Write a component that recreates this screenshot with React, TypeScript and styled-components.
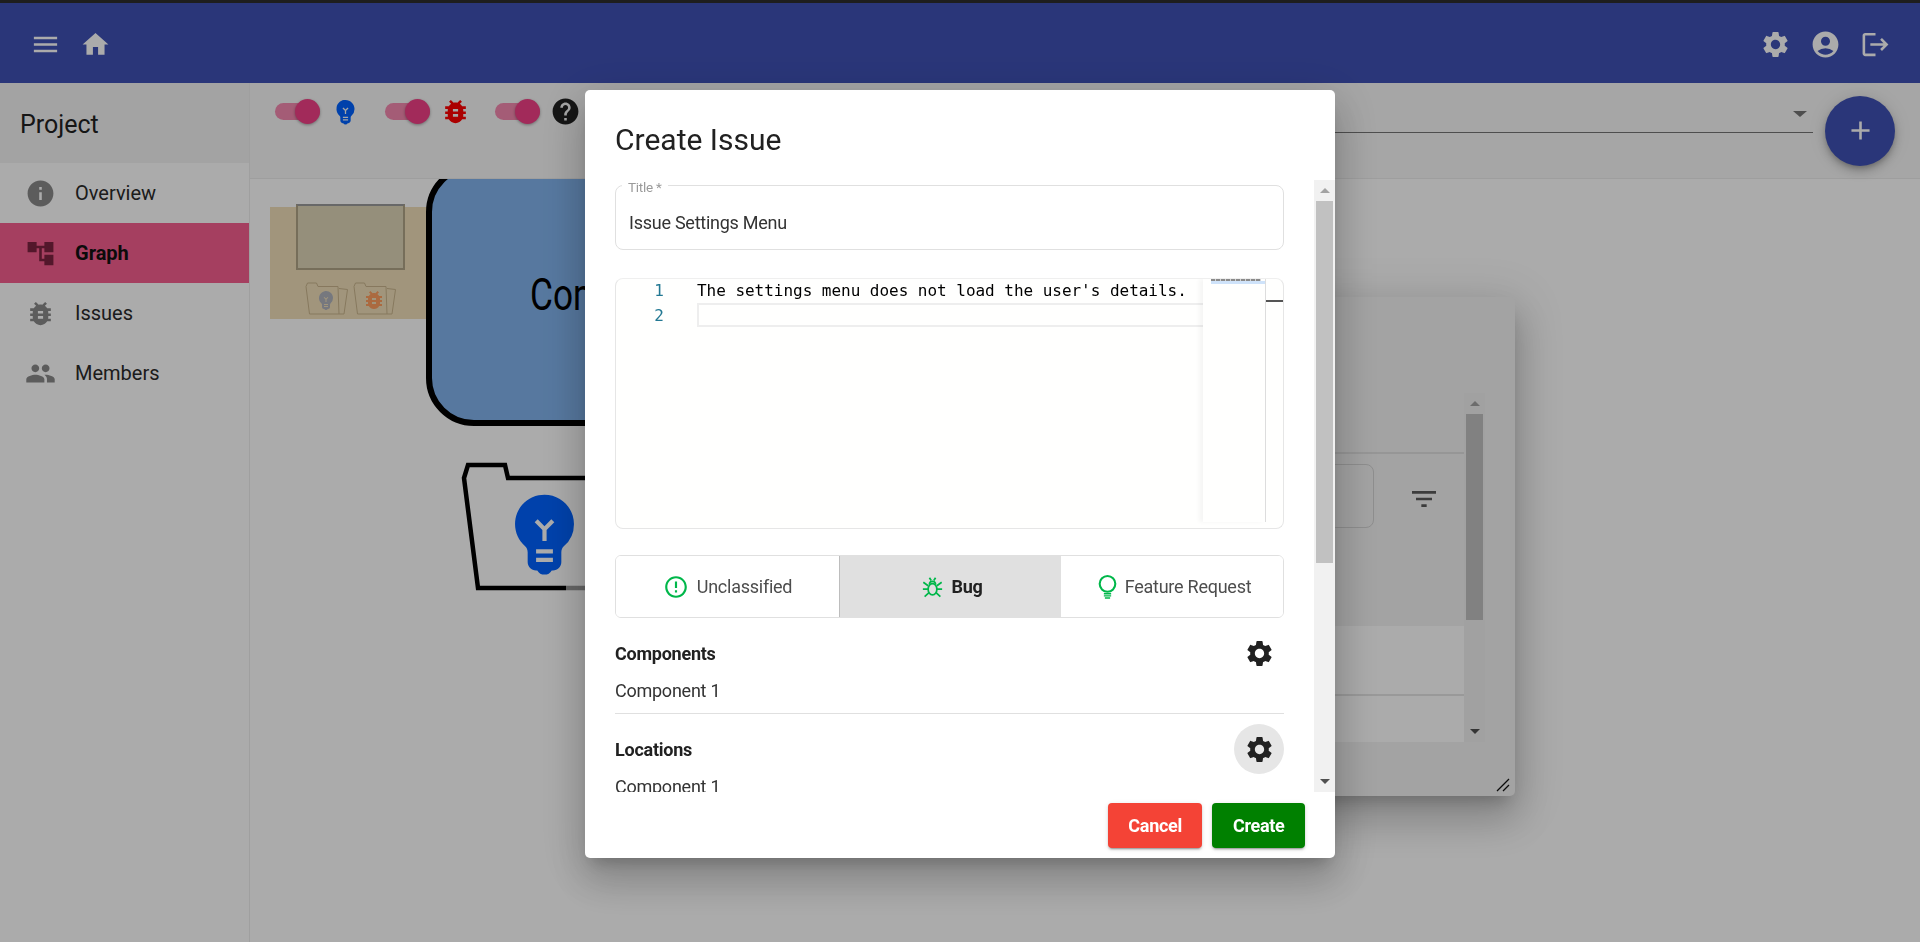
import styled, { createGlobalStyle } from 'styled-components';
import {
  MdAccountCircle,
  MdAccountTree,
  MdAdd,
  MdBugReport,
  MdEmojiObjects,
  MdErrorOutline,
  MdFilterList,
  MdHelp,
  MdHome,
  MdInfo,
  MdLogout,
  MdMenu,
  MdPeople,
  MdSettings,
} from 'react-icons/md';

const GlobalStyle = createGlobalStyle`
  html, body {
    margin: 0;
    height: 100%;
    overflow: hidden;
    background: #fff;
    font-family: 'Roboto', 'Liberation Sans', sans-serif;
    font-size: 18px;
    color: #212121;
  }
  * { box-sizing: border-box; }
`;

const Page = styled.div`
  display: flex;
  flex-direction: column;
  height: 942px;
  background: #fff;
`;

const TopStrip = styled.div`
  height: 3px;
  background: #2d2d2d;
`;

const AppBar = styled.header`
  display: flex;
  align-items: center;
  justify-content: space-between;
  height: 80px;
  padding: 2px 20px 0;
  background: #3f51b5;
  color: #fff;
`;

const IconGroup = styled.div`
  display: flex;
`;

const BarIcon = styled.div`
  display: flex;
  align-items: center;
  justify-content: center;
  width: 50px;
  height: 50px;
  font-size: 31px;
`;

const Body = styled.div`
  display: flex;
  flex: 1;
  min-height: 0;
`;

const Sidebar = styled.nav`
  width: 250px;
  flex-shrink: 0;
  border-right: 1px solid #ededed;
`;

const SidebarHeader = styled.div`
  display: flex;
  align-items: center;
  height: 80px;
  padding: 2px 0 0 20px;
  background: #f4f4f4;
  font-size: 25px;
  color: #212121;
`;

const NavItem = styled.div<{ $active?: boolean }>`
  display: flex;
  align-items: center;
  gap: 19px;
  height: 60px;
  padding-left: 25px;
  font-size: 20px;
  font-weight: ${(p) => (p.$active ? 700 : 400)};
  color: ${(p) => (p.$active ? '#111' : '#2a2a2a')};
  background: ${(p) => (p.$active ? '#f65f8f' : 'transparent')};

  svg {
    font-size: 31px;
    color: ${(p) => (p.$active ? '#7c2340' : '#8a8a8a')};
  }
`;

const Main = styled.main`
  display: flex;
  flex: 1;
  flex-direction: column;
  min-width: 0;
`;

const Toolbar = styled.div`
  display: flex;
  align-items: center;
  height: 96px;
  padding: 0 25px;
  gap: 12px;
  background: #f8f8f8;
  border-bottom: 1px solid #ececec;
`;

const FilterGroup = styled.div`
  display: flex;
  align-self: flex-start;
  margin-top: 13px;
`;

const FilterItem = styled.div`
  display: flex;
  align-items: center;
  gap: 10px;
  width: 110px;
  height: 31px;
`;

const SwitchTrack = styled.div`
  position: relative;
  width: 45px;
  height: 17px;
  border-radius: 9px;
  background: #f58ab0;
`;

const SwitchThumb = styled.div`
  position: absolute;
  top: -4px;
  right: 0;
  width: 25px;
  height: 25px;
  border-radius: 50%;
  background: #f23f86;
  box-shadow: 0 1px 3px rgba(0, 0, 0, 0.35);
`;

const FilterIcon = styled.span<{ $color: string }>`
  display: flex;
  font-size: 31px;
  color: ${(p) => p.$color};
`;

const SelectField = styled.div`
  position: relative;
  flex: 1;
  align-self: flex-start;
  height: 50px;
  border-bottom: 1px solid #757575;
`;

const SelectArrow = styled.span`
  position: absolute;
  right: 6px;
  top: 28px;
  border-left: 7px solid transparent;
  border-right: 7px solid transparent;
  border-top: 6px solid #757575;
`;

const Fab = styled.button`
  display: flex;
  align-items: center;
  justify-content: center;
  width: 70px;
  height: 70px;
  padding: 0;
  border: none;
  border-radius: 50%;
  background: #3f51b5;
  color: #fff;
  font-size: 31px;
  box-shadow: 0 3px 5px -1px rgba(0, 0, 0, 0.2), 0 6px 10px 0 rgba(0, 0, 0, 0.14), 0 1px 18px 0 rgba(0, 0, 0, 0.12);
`;

const Canvas = styled.div`
  position: relative;
  flex: 1;
  overflow: hidden;
`;

const GraphNode = styled.div`
  position: absolute;
  left: 176px;
  top: -15px;
  display: flex;
  align-items: center;
  width: 700px;
  height: 262px;
  padding-left: 98px;
  border: 6.5px solid #000;
  border-radius: 48px;
  background: #82b4ee;
  color: #000;
  font-size: 44px;
`;

const NodeLabel = styled.span`
  transform: scaleX(0.8);
  transform-origin: left center;
`;

const FolderShape = styled.svg`
  position: absolute;
  left: 210px;
  top: 283px;
`;

const FolderBulb = styled(MdEmojiObjects)`
  position: absolute;
  left: 244px;
  top: 303px;
  font-size: 101px;
  color: #0062ff;
`;

const Minimap = styled.div`
  position: absolute;
  left: 20px;
  top: 28px;
  display: flex;
  flex-direction: column;
  align-items: center;
  width: 160px;
  height: 112px;
  background: #f0dfba;
`;

const MinimapView = styled.div`
  width: 109px;
  height: 66px;
  margin-top: -3px;
  border: 2px solid #b0a486;
  border-top-color: #9b9b9b;
  background: #dfd6b8;
`;

const MinimapFolders = styled.div`
  display: flex;
  gap: 5px;
  margin-top: 12px;
`;

const MiniFolder = styled.div<{ $color: string }>`
  position: relative;
  width: 43px;
  height: 33px;
  color: ${(p) => p.$color};

  svg:last-child {
    position: absolute;
    left: 9px;
    top: 6px;
    font-size: 24px;
  }
`;

const BackWindow = styled.div`
  position: absolute;
  top: 118px;
  left: 500px;
  display: flex;
  width: 765px;
  height: 499px;
  padding: 96px 30px 0 0;
  border-radius: 5px;
  background: #f3f3f3;
  box-shadow: 0 11px 15px -7px rgba(0, 0, 0, 0.2), 0 24px 38px 3px rgba(0, 0, 0, 0.14), 0 9px 46px 8px rgba(0, 0, 0, 0.12);
`;

const BackContent = styled.div`
  flex: 1;
  height: 349px;
`;

const BackHeader = styled.div`
  height: 61px;
  border-bottom: 2px solid #e0e0e0;
`;

const BackFilterRow = styled.div`
  display: flex;
  height: 64px;
  margin: 10px 0 98px;
`;

const BackSearch = styled.div`
  flex: 1;
  border: 1px solid #d4d4d4;
  border-radius: 8px;
`;

const BackFilterButton = styled.div`
  display: flex;
  align-items: center;
  justify-content: center;
  width: 80px;
  margin-left: 10px;
  padding-top: 5px;
  font-size: 32px;
  color: #5a5a5a;
`;

const BackRow = styled.div<{ $height: number }>`
  height: ${(p) => p.$height}px;
  background: #fff;
  border-bottom: 2px solid #e4e4e4;
  &:last-child { border-bottom: none; }
`;

const ScrollTrack = styled.div<{ $height: number }>`
  display: flex;
  flex-direction: column;
  flex-shrink: 0;
  width: 21px;
  height: ${(p) => p.$height}px;
  background: #f1f1f1;
`;

const ScrollButton = styled.div`
  display: flex;
  align-items: center;
  justify-content: center;
  flex-shrink: 0;
  height: 21px;
`;

const ArrowUp = styled.span`
  border-left: 5px solid transparent;
  border-right: 5px solid transparent;
  border-bottom: 5px solid #a3a3a3;
`;

const ArrowDown = styled.span`
  border-left: 5px solid transparent;
  border-right: 5px solid transparent;
  border-top: 5px solid #505050;
`;

const ScrollThumb = styled.div<{ $height: number }>`
  height: ${(p) => p.$height}px;
  margin: 0 2px;
  background: #c1c1c1;
`;

const ScrollRest = styled.div`
  flex: 1;
`;

const ResizeGrip = styled.svg`
  position: absolute;
  right: 5px;
  bottom: 4px;
`;

const Backdrop = styled.div`
  position: fixed;
  top: 0;
  left: 0;
  right: 0;
  bottom: 0;
  display: flex;
  justify-content: center;
  align-items: flex-start;
  padding-top: 90px;
  background: rgba(0, 0, 0, 0.33);
`;

const Dialog = styled.div`
  display: flex;
  flex-direction: column;
  width: 750px;
  height: 768px;
  border-radius: 5px;
  background: #fff;
  letter-spacing: -0.25px;
  box-shadow: 0 11px 15px -7px rgba(0, 0, 0, 0.2), 0 24px 38px 3px rgba(0, 0, 0, 0.14), 0 9px 46px 8px rgba(0, 0, 0, 0.12);
`;

const DialogTitle = styled.h2`
  display: flex;
  align-items: center;
  height: 90px;
  margin: 0;
  padding: 8px 30px 0;
  font-size: 30px;
  font-weight: 400;
  letter-spacing: 0;
  color: #212121;
`;

const DialogScroll = styled.div`
  display: flex;
  justify-content: space-between;
  height: 612px;
  padding-left: 30px;
`;

const DialogContent = styled.div`
  width: 669px;
  height: 612px;
  padding-top: 5px;
  overflow: hidden;
`;

const TitleField = styled.div`
  position: relative;
  display: flex;
  align-items: center;
  height: 65px;
  padding: 10px 13px 0;
  border: 1px solid #e0e0e0;
  border-radius: 8px;
  font-size: 18px;
  color: #333;
`;

const TitleLabel = styled.label`
  position: absolute;
  left: 6px;
  top: -6px;
  padding: 0 6px;
  background: #fff;
  font-size: 13.5px;
  line-height: 15px;
  color: #9a9a9a;
`;

const Editor = styled.div`
  display: flex;
  height: 251px;
  margin-top: 28px;
  padding-bottom: 6px;
  border: 1px solid #e6e6e6;
  border-top-color: #efefef;
  border-radius: 8px;
  background: #fffffe;
  overflow: hidden;
  letter-spacing: 0;
`;

const Gutter = styled.div`
  flex-shrink: 0;
  width: 81px;
  padding-right: 33px;
  font-family: 'DejaVu Sans Mono', 'Liberation Mono', monospace;
  font-size: 16px;
  line-height: 24.5px;
  text-align: right;
  color: #237893;
`;

const CodeArea = styled.div`
  flex: 1;
  min-width: 0;
  font-family: 'DejaVu Sans Mono', 'Liberation Mono', monospace;
  font-size: 16px;
  line-height: 24px;
  letter-spacing: -0.03px;
  color: #000;
  white-space: pre;
`;

const CodeLine = styled.div<{ $current?: boolean }>`
  height: 24px;
  border: ${(p) => (p.$current ? '2px solid #eeeeee' : 'none')};
  border-right: none;
`;

const EditorMinimap = styled.div`
  flex-shrink: 0;
  width: 63px;
  padding: 0 4px 0 8px;
  border-right: 1px solid #dddddd;
  box-shadow: -4px 0 4px rgba(0, 0, 0, 0.04);
`;

const MinimapText = styled.div`
  height: 2px;
  margin-top: 0;
  background: repeating-linear-gradient(90deg, #8a8a8a 0 4px, #d4d4d4 4px 5px);
`;

const MinimapLine = styled.div`
  height: 3px;
  margin-right: -4px;
  background: #cfe3fa;
`;

const OverviewRuler = styled.div`
  flex-shrink: 0;
  width: 17px;
`;

const RulerMark = styled.div`
  height: 2px;
  margin-top: 21px;
  background: #555;
`;

const ToggleGroup = styled.div`
  display: grid;
  grid-template-columns: 223px 222px 1fr;
  height: 63px;
  margin-top: 26px;
  border: 1px solid #e0e0e0;
  border-radius: 6px;
  overflow: hidden;
`;

const ToggleButton = styled.div<{ $selected?: boolean; $shift?: number }>`
  display: flex;
  align-items: center;
  justify-content: center;
  gap: 8px;
  padding-left: ${(p) => p.$shift ?? 0}px;
  font-size: 18px;
  font-weight: ${(p) => (p.$selected ? 700 : 400)};
  color: ${(p) => (p.$selected ? '#212121' : '#4d4d4d')};
  background: ${(p) => (p.$selected ? '#e0e0e0' : '#fff')};
  border-left: ${(p) => (p.$selected ? '1px solid #bdbdbd' : 'none')};

  svg {
    flex-shrink: 0;
    color: #00b74a;
  }
`;

const Section = styled.section`
  margin-top: 10px;
  &:first-of-type { border-bottom: 1px solid #e0e0e0; }
`;

const SectionHeader = styled.div`
  display: flex;
  align-items: center;
  justify-content: space-between;
  height: 50px;
  font-size: 18px;
  font-weight: 700;
  color: #212121;
`;

const GearButton = styled.div<{ $hover?: boolean }>`
  display: flex;
  align-items: center;
  justify-content: center;
  width: 50px;
  height: 50px;
  border-radius: 50%;
  font-size: 31px;
  background: ${(p) => (p.$hover ? '#e6e6e6' : 'transparent')};
`;

const SectionValue = styled.div`
  height: 35px;
  font-size: 18px;
  line-height: 25px;
  color: #333;
`;

const DialogActions = styled.div`
  display: flex;
  justify-content: flex-end;
  gap: 10px;
  padding: 11px 30px 0 0;
`;

const ActionButton = styled.button<{ $color: string }>`
  height: 45px;
  padding: 0 20.500px;
  border: none;
  border-radius: 4px;
  background: ${(p) => p.$color};
  color: #fff;
  font-family: inherit;
  font-size: 18px;
  font-weight: 700;
  letter-spacing: -0.3px;
  box-shadow: 0 3px 1px -2px rgba(0, 0, 0, 0.2), 0 2px 2px 0 rgba(0, 0, 0, 0.14), 0 1px 5px 0 rgba(0, 0, 0, 0.12);
`;

function OutlineBug() {
  return (
    <svg width="21" height="22" viewBox="0 0 24 24" fill="none" stroke="currentColor" strokeWidth="2">
      <ellipse cx="12" cy="14.5" rx="5" ry="6.5" />
      <path d="M8.5 9a3.5 3.5 0 0 1 7 0" />
      <path d="M8.5 1.5l2 3M15.5 1.5l-2 3M1.5 6.5l5.5 4M22.5 6.5l-5.5 4M1 14.5h6M23 14.5h-6M3 23l5-4.5M21 23l-5-4.5" />
    </svg>
  );
}

function OutlineBulb() {
  return (
    <svg width="19" height="24" viewBox="0 0 18 23" fill="none" stroke="currentColor">
      <circle cx="9" cy="8.5" r="7.5" strokeWidth="2" />
      <path d="M5.5 18h7M5.5 20h7M6.5 22h5" strokeWidth="1.4" />
    </svg>
  );
}

function SmallFolder() {
  return (
    <svg width="43" height="33" viewBox="0 0 43 33" fill="none" stroke="#c9b48c" strokeWidth="1">
      <path d="M4.500 32 1 4.500 2.500 1h9l1.500 3.500h20l1 27.500zM34 6.500l8.500 1L39 32h-5" />
    </svg>
  );
}

export default function App() {
  return (
    <Page>
      <GlobalStyle />
      <TopStrip />
      <AppBar>
        <IconGroup>
          <BarIcon><MdMenu /></BarIcon>
          <BarIcon><MdHome /></BarIcon>
        </IconGroup>
        <IconGroup>
          <BarIcon><MdSettings /></BarIcon>
          <BarIcon><MdAccountCircle /></BarIcon>
          <BarIcon><MdLogout /></BarIcon>
        </IconGroup>
      </AppBar>
      <Body>
        <Sidebar>
          <SidebarHeader>Project</SidebarHeader>
          <NavItem><MdInfo />Overview</NavItem>
          <NavItem $active><MdAccountTree />Graph</NavItem>
          <NavItem><MdBugReport />Issues</NavItem>
          <NavItem><MdPeople />Members</NavItem>
        </Sidebar>
        <Main>
          <Toolbar>
            <FilterGroup>
              <FilterItem>
                <SwitchTrack><SwitchThumb /></SwitchTrack>
                <FilterIcon $color="#0062ff"><MdEmojiObjects /></FilterIcon>
              </FilterItem>
              <FilterItem>
                <SwitchTrack><SwitchThumb /></SwitchTrack>
                <FilterIcon $color="#ff0000"><MdBugReport /></FilterIcon>
              </FilterItem>
              <FilterItem>
                <SwitchTrack><SwitchThumb /></SwitchTrack>
                <FilterIcon $color="#212121"><MdHelp /></FilterIcon>
              </FilterItem>
            </FilterGroup>
            <SelectField><SelectArrow /></SelectField>
            <Fab><MdAdd /></Fab>
          </Toolbar>
          <Canvas>
            <Minimap>
              <MinimapView />
              <MinimapFolders>
                <MiniFolder $color="#b0b3bd"><SmallFolder /><MdEmojiObjects /></MiniFolder>
                <MiniFolder $color="#ff9e60"><SmallFolder /><MdBugReport /></MiniFolder>
              </MinimapFolders>
            </Minimap>
            <GraphNode><NodeLabel>Component</NodeLabel></GraphNode>
            <FolderShape width="200" height="130" viewBox="0 0 200 130" fill="none" stroke="#000" strokeWidth="4.500">
              <path d="M140 16H48L45 3H8L4 16L18 126H106" />
              <path d="M106 126H140" stroke="#999" />
            </FolderShape>
            <FolderBulb />
            <BackWindow>
              <BackContent>
                <BackHeader />
                <BackFilterRow>
                  <BackSearch />
                  <BackFilterButton><MdFilterList /></BackFilterButton>
                </BackFilterRow>
                <BackRow $height={70} />
                <BackRow $height={46} />
              </BackContent>
              <ScrollTrack $height={349}>
                <ScrollButton><ArrowUp /></ScrollButton>
                <ScrollThumb $height={206} />
                <ScrollRest />
                <ScrollButton><ArrowDown /></ScrollButton>
              </ScrollTrack>
              <ResizeGrip width="14" height="14" viewBox="0 0 14 14" stroke="#111" strokeWidth="1.300">
                <path d="M1 13L13 1M7 13l6-6" />
              </ResizeGrip>
            </BackWindow>
          </Canvas>
        </Main>
      </Body>
      <Backdrop>
        <Dialog>
          <DialogTitle>Create Issue</DialogTitle>
          <DialogScroll>
            <DialogContent>
              <TitleField>
                <TitleLabel>Title *</TitleLabel>
                Issue Settings Menu
              </TitleField>
              <Editor>
                <Gutter>
                  <div>1</div>
                  <div>2</div>
                </Gutter>
                <CodeArea>
                  <CodeLine>The settings menu does not load the user's details.</CodeLine>
                  <CodeLine $current />
                </CodeArea>
                <EditorMinimap>
                  <MinimapText />
                  <MinimapLine />
                </EditorMinimap>
                <OverviewRuler><RulerMark /></OverviewRuler>
              </Editor>
              <ToggleGroup>
                <ToggleButton><MdErrorOutline size={26} />Unclassified</ToggleButton>
                <ToggleButton $selected $shift={4}><OutlineBug />Bug</ToggleButton>
                <ToggleButton $shift={5}><OutlineBulb />Feature Request</ToggleButton>
              </ToggleGroup>
              <Section>
                <SectionHeader>Components<GearButton><MdSettings /></GearButton></SectionHeader>
                <SectionValue>Component 1</SectionValue>
              </Section>
              <Section>
                <SectionHeader>Locations<GearButton $hover><MdSettings /></GearButton></SectionHeader>
                <SectionValue>Component 1</SectionValue>
              </Section>
            </DialogContent>
            <ScrollTrack $height={612}>
              <ScrollButton><ArrowUp /></ScrollButton>
              <ScrollThumb $height={362} />
              <ScrollRest />
              <ScrollButton><ArrowDown /></ScrollButton>
            </ScrollTrack>
          </DialogScroll>
          <DialogActions>
            <ActionButton $color="#f44336">Cancel</ActionButton>
            <ActionButton $color="#008000">Create</ActionButton>
          </DialogActions>
        </Dialog>
      </Backdrop>
    </Page>
  );
}
